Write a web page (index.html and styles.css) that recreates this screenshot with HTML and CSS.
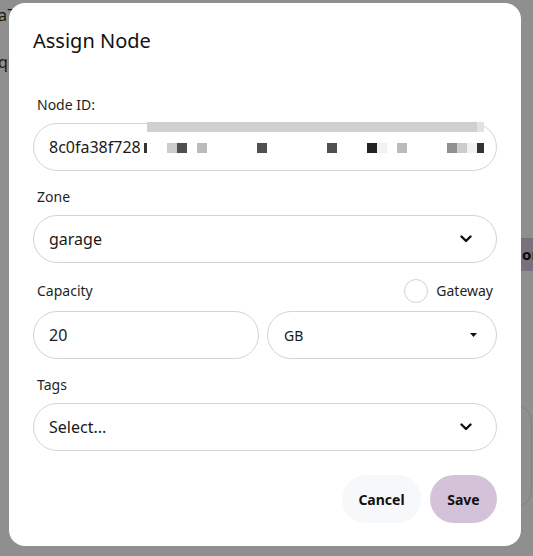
FILE: index.html
```html
<!DOCTYPE html>
<html lang="en">
    <head>
        <meta charset="UTF-8" />
        <meta name="viewport" content="width=device-width, initial-scale=1.0" />
        <title>Assign Node</title>
        <link rel="stylesheet" href="styles.css">
    </head>
    <body>
        <div class="page-behind">
            <span class="behind-text behind-a">a7</span>
            <span class="behind-text behind-b">ql</span>
            <div class="behind-bar">or</div>
            <div class="behind-card"></div>
        </div>
        <div class="backdrop"></div>

        <div class="dialog">
            <h2 class="dialog-title">Assign Node</h2>
            <form class="dialog-form">
                <div class="field">
                    <label class="field-label">Node ID:</label>
                    <div class="control redacted">
                        <span class="control-text">8c0fa38f728</span>
                        <span class="mask mask-bar"></span>
                        <span class="mask" style="left:110px;width:3px;background:#333"></span>
                        <span class="mask" style="left:133px;background:#cccccc"></span>
                        <span class="mask" style="left:143px;background:#505050"></span>
                        <span class="mask" style="left:163px;background:#bbbbbb"></span>
                        <span class="mask" style="left:223px;background:#505050"></span>
                        <span class="mask" style="left:293px;background:#505050"></span>
                        <span class="mask" style="left:333px;background:#222222"></span>
                        <span class="mask" style="left:343px;background:#f2f2f2"></span>
                        <span class="mask" style="left:363px;background:#bbbbbb"></span>
                        <span class="mask" style="left:413px;background:#909090"></span>
                        <span class="mask" style="left:423px;background:#cccccc"></span>
                        <span class="mask" style="left:433px;background:#f2f2f2"></span>
                        <span class="mask" style="left:443px;width:7px;background:#333333"></span>
                    </div>
                </div>

                <div class="field">
                    <label class="field-label">Zone</label>
                    <div class="control select">
                        <span class="control-text">garage</span>
                        <svg class="chevron" width="12" height="8" viewBox="0 0 12 8">
                            <path d="M1.5 1.5 L6 6 L10.5 1.5" fill="none" stroke="#111" stroke-width="2.4" stroke-linecap="round" stroke-linejoin="round"/>
                        </svg>
                    </div>
                </div>

                <div class="field">
                    <div class="field-label label-row">
                        <span>Capacity</span>
                        <span class="radio-wrap">
                            <span class="radio"></span>
                            <span>Gateway</span>
                        </span>
                    </div>
                    <div class="control-pair">
                        <div class="control">
                            <span class="control-text">20</span>
                        </div>
                        <div class="control select small">
                            <span class="control-text">GB</span>
                            <svg class="caret" width="7" height="4" viewBox="0 0 7 4">
                                <path d="M0 0 H7 L3.5 4 Z" fill="#111"/>
                            </svg>
                        </div>
                    </div>
                </div>

                <div class="field">
                    <label class="field-label">Tags</label>
                    <div class="control select">
                        <span class="control-text">Select...</span>
                        <svg class="chevron" width="12" height="8" viewBox="0 0 12 8">
                            <path d="M1.5 1.5 L6 6 L10.5 1.5" fill="none" stroke="#111" stroke-width="2.4" stroke-linecap="round" stroke-linejoin="round"/>
                        </svg>
                    </div>
                </div>
            </form>
            <div class="dialog-actions">
                <button class="btn btn-cancel" type="button">Cancel</button>
                <button class="btn btn-save" type="button">Save</button>
            </div>
        </div>
    </body>
</html>
```

FILE: styles.css
```css
body {
    margin: 0;
    width: 533px;
    height: 556px;
    overflow: hidden;
    font-family: "Noto Sans", "Open Sans", sans-serif;
    background-color: #ffffff;
    color: #1a1a1a;
}

.page-behind {
    position: absolute;
    inset: 0;
}

.behind-text {
    position: absolute;
    left: -2px;
    font-size: 16px;
    color: #3b2a12;
}

.behind-a {
    top: 4px;
}

.behind-b {
    top: 51px;
}

.behind-bar {
    position: absolute;
    left: 521px;
    top: 238px;
    width: 40px;
    height: 33px;
    background-color: #d9c7de;
    font-size: 15px;
    font-weight: 700;
    line-height: 33px;
    color: #111;
    padding-left: 1px;
}

.behind-card {
    position: absolute;
    left: 470px;
    top: 405px;
    width: 60px;
    height: 100px;
    border: 1px solid #e4e4e4;
    border-radius: 16px;
}

.backdrop {
    position: absolute;
    inset: 0;
    background-color: rgba(0, 0, 0, 0.44);
}

.dialog {
    position: absolute;
    left: 9px;
    top: 3px;
    width: 512px;
    height: 543px;
    box-sizing: border-box;
    padding: 24px 24px 23px;
    background-color: #ffffff;
    border-radius: 16px;
    display: flex;
    flex-direction: column;
}

.dialog-title {
    margin: 0 0 40px;
    font-size: 20px;
    font-weight: 400;
    line-height: 28px;
    color: #111;
}

.dialog-form {
    display: flex;
    flex-direction: column;
    gap: 16px;
}

.field {
    display: flex;
    flex-direction: column;
    gap: 8px;
}

.field-label {
    padding: 0 4px;
    font-size: 14px;
    line-height: 20px;
    color: #1f1f1f;
}

.label-row {
    display: flex;
    justify-content: space-between;
    align-items: center;
    height: 24px;
}

.radio-wrap {
    display: flex;
    align-items: center;
    gap: 8px;
}

.radio {
    width: 22px;
    height: 22px;
    border: 1px solid #d2d2d2;
    border-radius: 50%;
}

.control {
    position: relative;
    height: 48px;
    box-sizing: border-box;
    border: 1px solid #d4d4d4;
    border-radius: 24px;
    padding: 0 15px;
    display: flex;
    align-items: center;
    justify-content: space-between;
    font-size: 16px;
    color: #1a1a1a;
}

.select {
    padding-right: 24px;
}

.small .control-text {
    font-size: 14px;
    padding-left: 1px;
}

.small {
    padding-right: 19px;
}

.control-pair {
    display: flex;
    gap: 8px;
}

.control-pair .control {
    flex: 1 1 0;
}

.redacted {
    overflow: visible;
}

.mask {
    position: absolute;
    top: 19px;
    width: 10px;
    height: 10px;
}

.mask-bar {
    top: -2px;
    left: 113px;
    width: 337px;
    height: 10px;
    background: linear-gradient(to right, #d0d0d0 0, #d0d0d0 330px, #e2e2e2 330px);
}

.dialog-actions {
    margin-top: auto;
    display: flex;
    justify-content: flex-end;
    gap: 9px;
}

.btn {
    height: 48px;
    border: none;
    border-radius: 24px;
    font-family: inherit;
    font-size: 14px;
    font-weight: 700;
    color: #111;
    cursor: pointer;
}

.btn-cancel {
    width: 79px;
    background-color: #f7f8fa;
}

.btn-save {
    width: 67px;
    background-color: #d4c2d9;
}
```
